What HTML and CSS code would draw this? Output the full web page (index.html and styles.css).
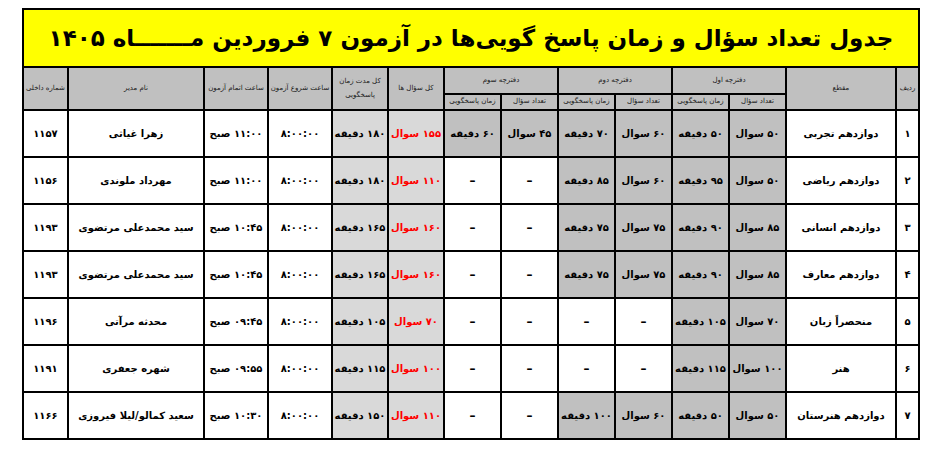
FILE: index.html
```html
<!DOCTYPE html>
<html lang="fa" dir="rtl">
<head>
<meta charset="utf-8">
<title>جدول تعداد سؤال و زمان پاسخ گویی‌ها</title>
<link rel="stylesheet" href="styles.css">
</head>
<body>
<div class="page">
<table class="sheet">
  <colgroup>
    <col class="c-radif"><col class="c-maghta">
    <col class="c-b"><col class="c-b"><col class="c-b"><col class="c-b"><col class="c-b"><col class="c-b">
    <col class="c-tot"><col class="c-tot">
    <col class="c-time"><col class="c-time">
    <col class="c-name"><col class="c-num">
  </colgroup>
  <tr class="r-title">
    <td colspan="14" class="title">جدول تعداد سؤال و زمان پاسخ گویی‌ها در آزمون ۷ فروردین مـــــــاه ۱۴۰۵</td>
  </tr>
  <tr class="r-h1">
    <th rowspan="2">ردیف</th>
    <th rowspan="2">مقطع</th>
    <th colspan="2">دفترچه اول</th>
    <th colspan="2">دفترچه دوم</th>
    <th colspan="2">دفترچه سوم</th>
    <th rowspan="2">کل سؤال ها</th>
    <th rowspan="2" class="wrap">کل مدت زمان<br>پاسخگویی</th>
    <th rowspan="2">ساعت شروع آزمون</th>
    <th rowspan="2">ساعت اتمام آزمون</th>
    <th rowspan="2">نام مدیر</th>
    <th rowspan="2">شماره داخلی</th>
  </tr>
  <tr class="r-h2">
    <th>تعداد سؤال</th><th>زمان پاسخگویی</th>
    <th>تعداد سؤال</th><th>زمان پاسخگویی</th>
    <th>تعداد سؤال</th><th>زمان پاسخگویی</th>
  </tr>
  <tr class="row">
    <td>۱</td><td>دوازدهم تجربی</td>
    <td class="g">۵۰ سوال</td><td class="g">۵۰ دقیقه</td>
    <td class="g">۶۰ سوال</td><td class="g">۷۰ دقیقه</td>
    <td class="g">۴۵ سوال</td><td class="g">۶۰ دقیقه</td>
    <td class="lg red">۱۵۵ سوال</td><td class="lg">۱۸۰ دقیقه</td>
    <td>۸:۰۰:۰۰</td><td>۱۱:۰۰ صبح</td><td>زهرا غیاثی</td><td>۱۱۵۷</td>
  </tr>
  <tr class="row">
    <td>۲</td><td>دوازدهم ریاضی</td>
    <td class="g">۵۰ سوال</td><td class="g">۹۵ دقیقه</td>
    <td class="g">۶۰ سوال</td><td class="g">۸۵ دقیقه</td>
    <td class="dash">–</td><td class="dash">–</td>
    <td class="lg red">۱۱۰ سوال</td><td class="lg">۱۸۰ دقیقه</td>
    <td>۸:۰۰:۰۰</td><td>۱۱:۰۰ صبح</td><td>مهرداد ملوندی</td><td>۱۱۵۶</td>
  </tr>
  <tr class="row">
    <td>۳</td><td>دوازدهم انسانی</td>
    <td class="g">۸۵ سوال</td><td class="g">۹۰ دقیقه</td>
    <td class="g">۷۵ سوال</td><td class="g">۷۵ دقیقه</td>
    <td class="dash">–</td><td class="dash">–</td>
    <td class="lg red">۱۶۰ سوال</td><td class="lg">۱۶۵ دقیقه</td>
    <td>۸:۰۰:۰۰</td><td>۱۰:۴۵ صبح</td><td>سید محمدعلی مرتضوی</td><td>۱۱۹۳</td>
  </tr>
  <tr class="row">
    <td>۴</td><td>دوازدهم معارف</td>
    <td class="g">۸۵ سوال</td><td class="g">۹۰ دقیقه</td>
    <td class="g">۷۵ سوال</td><td class="g">۷۵ دقیقه</td>
    <td class="dash">–</td><td class="dash">–</td>
    <td class="lg red">۱۶۰ سوال</td><td class="lg">۱۶۵ دقیقه</td>
    <td>۸:۰۰:۰۰</td><td>۱۰:۴۵ صبح</td><td>سید محمدعلی مرتضوی</td><td>۱۱۹۳</td>
  </tr>
  <tr class="row">
    <td>۵</td><td>منحصراً زبان</td>
    <td class="g">۷۰ سوال</td><td class="g">۱۰۵ دقیقه</td>
    <td class="dash">–</td><td class="dash">–</td>
    <td class="dash">–</td><td class="dash">–</td>
    <td class="lg red">۷۰ سوال</td><td class="lg">۱۰۵ دقیقه</td>
    <td>۸:۰۰:۰۰</td><td>۰۹:۴۵ صبح</td><td>محدثه مرآتی</td><td>۱۱۹۶</td>
  </tr>
  <tr class="row">
    <td>۶</td><td>هنر</td>
    <td class="g">۱۰۰ سوال</td><td class="g">۱۱۵ دقیقه</td>
    <td class="dash">–</td><td class="dash">–</td>
    <td class="dash">–</td><td class="dash">–</td>
    <td class="lg red">۱۰۰ سوال</td><td class="lg">۱۱۵ دقیقه</td>
    <td>۸:۰۰:۰۰</td><td>۰۹:۵۵ صبح</td><td>شهره جعفری</td><td>۱۱۹۱</td>
  </tr>
  <tr class="row">
    <td>۷</td><td>دوازدهم هنرستان</td>
    <td class="g">۵۰ سوال</td><td class="g">۵۰ دقیقه</td>
    <td class="g">۶۰ سوال</td><td class="g">۱۰۰ دقیقه</td>
    <td class="dash">–</td><td class="dash">–</td>
    <td class="lg red">۱۱۰ سوال</td><td class="lg">۱۵۰ دقیقه</td>
    <td>۸:۰۰:۰۰</td><td>۱۰:۳۰ صبح</td><td>سعید کمالو/لیلا فیروزی</td><td>۱۱۶۶</td>
  </tr>
</table>
</div>
</body>
</html>
```

FILE: styles.css
```css
html, body {
  margin: 0;
  padding: 0;
  background: #ffffff;
}

.page {
  padding: 8px 26px 0 24px;
  font-family: "DejaVu Sans", "Noto Sans", sans-serif;
}

.sheet {
  direction: rtl;
  border-collapse: collapse;
  table-layout: fixed;
  width: 896px;
  color: #000;
}

.c-radif { width: 23px; }
.c-maghta { width: 110px; }
.c-b { width: 57px; }
.c-tot { width: 56px; }
.c-time { width: 64px; }
.c-name { width: 136px; }
.c-num { width: 45px; }

.sheet td,
.sheet th {
  border: 2px solid #000;
  padding: 0;
  text-align: center;
  vertical-align: middle;
  white-space: nowrap;
  overflow: hidden;
}

.r-title { height: 58px; }
.title {
  background: #ffff00;
  font-size: 23px;
  font-weight: bold;
  line-height: 1;
}

.r-h1 { height: 27px; }
.r-h2 { height: 16px; }

.sheet th {
  background: #c0c0c0;
  font-size: 7px;
  font-weight: normal;
  color: #1a1a1a;
  line-height: 1.9;
}

.row { height: 47px; }
.row td {
  font-size: 10px;
  font-weight: bold;
}

.row td.dash {
  font-size: 12px;
}

.g { background: #c0c0c0; }
.lg { background: #d9d9d9; }
.red { color: #ff0000; }
```
